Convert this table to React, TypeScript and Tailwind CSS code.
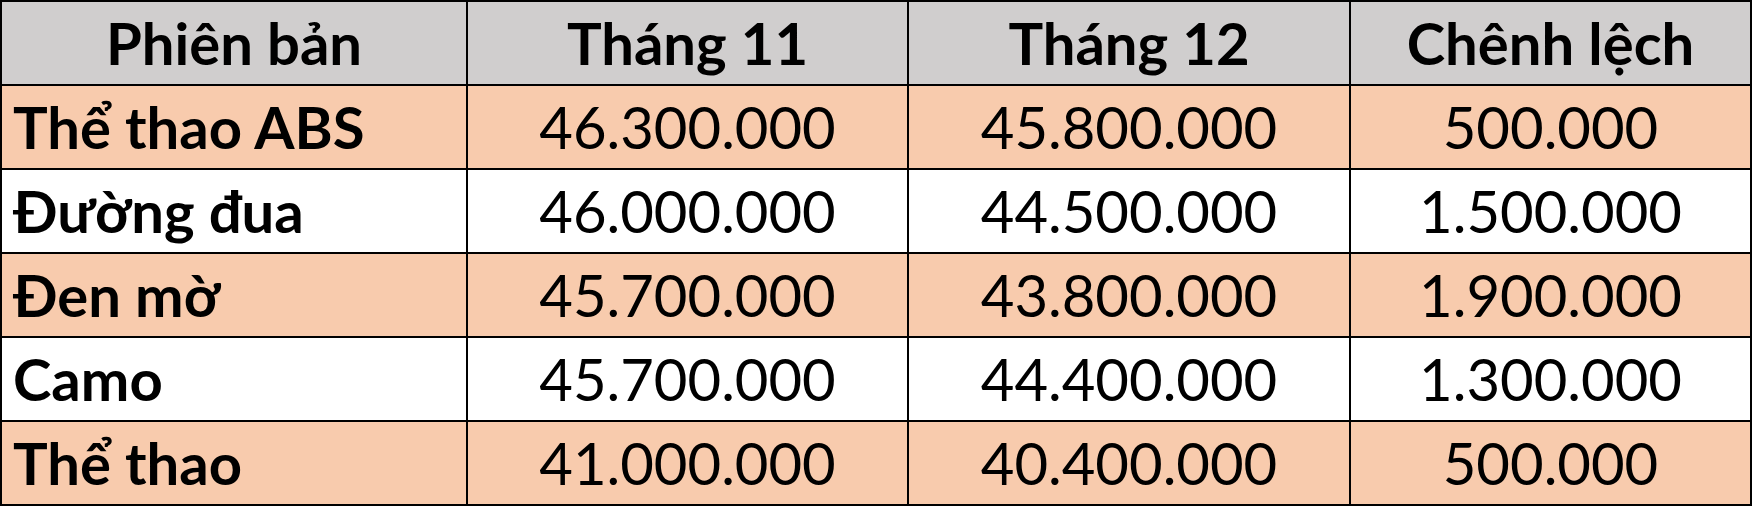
const rows = [
  { name: "Thể thao ABS", a: "46.300.000", b: "45.800.000", c: "500.000", tint: true },
  { name: "Đường đua", a: "46.000.000", b: "44.500.000", c: "1.500.000", tint: false },
  { name: "Đen mờ", a: "45.700.000", b: "43.800.000", c: "1.900.000", tint: true },
  { name: "Camo", a: "45.700.000", b: "44.400.000", c: "1.300.000", tint: false },
  { name: "Thể thao", a: "41.000.000", b: "40.400.000", c: "500.000", tint: true },
];

export default function App() {
  return (
    <div
      className="w-[1752px] h-[506px] bg-black p-[2px] grid grid-cols-[464px_439px_440px_399px] auto-rows-[82px] gap-[2px] text-black text-[58px] leading-none"
      style={{ fontFamily: "Lato, 'Open Sans', sans-serif" }}
    >
      {["Phiên bản", "Tháng 11", "Tháng 12", "Chênh lệch"].map((h) => (
        <div key={h} className="bg-[#d0cece] flex items-center justify-center font-bold">
          {h}
        </div>
      ))}
      {rows.map((r) => {
        const bg = r.tint ? "bg-[#f8cbad]" : "bg-white";
        return [
          <div key={r.name + "n"} className={`${bg} flex items-center pl-[11px] font-bold`}>
            {r.name}
          </div>,
          <div key={r.name + "a"} className={`${bg} flex items-center justify-center`}>
            {r.a}
          </div>,
          <div key={r.name + "b"} className={`${bg} flex items-center justify-center`}>
            {r.b}
          </div>,
          <div key={r.name + "c"} className={`${bg} flex items-center justify-center`}>
            {r.c}
          </div>,
        ];
      })}
    </div>
  );
}
